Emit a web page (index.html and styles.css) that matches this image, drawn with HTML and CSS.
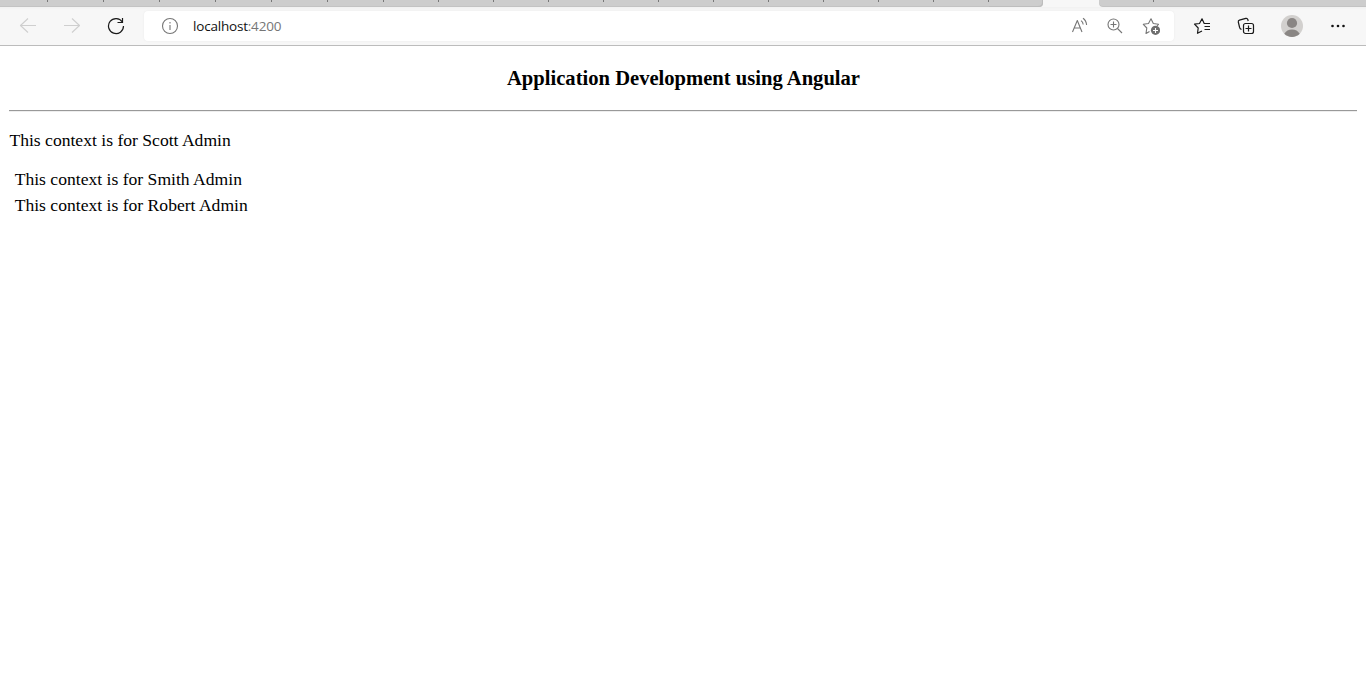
FILE: index.html
```html
<!DOCTYPE html>
<html lang="en">
<head>
<meta charset="utf-8">
<title>Angular</title>
<link rel="stylesheet" href="styles.css">
</head>
<body>
<div class="tabs">
  <i class="tab first"></i><i class="tab wide"></i><i class="tab wide"></i><i class="tab wide"></i><i class="tab wide"></i><i class="tab wide"></i><i class="tab wide"></i><i class="tab"></i><i class="tab"></i><i class="tab"></i><i class="tab"></i><i class="tab"></i><i class="tab"></i><i class="tab"></i><i class="tab"></i><i class="tab"></i><i class="tab"></i><i class="tab"></i><i class="tab before"></i><i class="active"></i><i class="tab after"></i><i class="rest"></i>
</div>
<header class="toolbar">
  <nav class="nav">
    <svg class="icon faded" viewBox="0 0 18 18"><path d="M17 8.5H1.5M9 1.5L1.5 8.5L9 15.5"/></svg>
    <svg class="icon faded" viewBox="0 0 18 18"><path d="M1 8.5h15.5M9 1.5l7.5 7L9 15.5"/></svg>
    <svg class="icon dark reload" viewBox="0 0 18 18"><path d="M15.3 5A7.5 7.5 0 1 0 16.5 9M15.5 1v4.5h-5"/></svg>
  </nav>
  <div class="address">
    <svg class="icon info" viewBox="0 0 18 18"><circle cx="9" cy="9" r="7.5"/><path d="M9 8v5M9 5v1.5"/></svg>
    <span class="url">localhost<span class="port">:4200</span></span>
    <div class="actions">
      <svg class="icon" viewBox="0 0 18 18"><path d="M2.5 15L7.3 3.5L12 15M4 11h6.6M11 3.6Q13 5 13.2 7.5M13 1.2Q16.3 3.5 16.6 8"/></svg>
      <svg class="icon" viewBox="0 0 18 18"><circle cx="7.5" cy="7.5" r="5.5"/><path d="M11.5 11.5L16 16M4.5 7.5h6M7.5 4.5v6"/></svg>
      <svg class="icon" viewBox="0 0 18 18"><path d="M7.5 14.5L4 16.5L4.8 11L1.3 7.3L6.5 6.5L9 1.8L11.3 6.5L16.5 7.3L15 9"/><circle class="disc" cx="13.5" cy="13.3" r="4.6"/><path class="plus" d="M11 13.5h5M13.5 11v5"/></svg>
    </div>
  </div>
  <div class="tools">
    <svg class="icon dark" viewBox="0 0 18 18"><path d="M9 14L4.5 16.3L5.2 11L1.5 7.2L6.5 6.5L9 1.8L11.2 6.5H17M11.5 9.5h5.5M11.5 12.5h5.5"/></svg>
    <svg class="icon dark" viewBox="0 0 18 18"><path d="M4.5 12.5Q3 12 2.6 10.5L1.3 5Q1 3.6 2.4 3.2L8.8 1.4Q10.3 1 10.8 2.5L11.2 4"/><rect x="6.5" y="6.5" width="10" height="10" rx="2"/><path d="M8.5 11.5h6M11.5 8.5v6"/></svg>
    <svg class="avatar" viewBox="0 0 22 22"><circle cx="11" cy="11" r="11" fill="#d2d0ce"/><circle cx="11" cy="8" r="5.1" fill="#8a8684"/><path d="M3.3 18.8Q5.8 14.4 11 14.4T18.7 18.8A11 11 0 0 1 3.3 18.8Z" fill="#8a8684"/></svg>
    <svg class="more" viewBox="0 0 18 18"><circle cx="3.5" cy="9" r="1.3"/><circle cx="9" cy="9" r="1.3"/><circle cx="14.5" cy="9" r="1.3"/></svg>
  </div>
</header>
<main class="page">
  <h3 class="title">Application Development using Angular</h3>
  <hr class="rule">
  <p class="lead">This context is for Scott Admin</p>
  <div class="rows">
    <div class="row">This context is for Smith Admin</div>
    <div class="row">This context is for Robert Admin</div>
  </div>
</main>
</body>
</html>
```
FILE: styles.css
```css
* { box-sizing: border-box; }
body { margin: 0; background: #fff; color: #000; font-family: "Liberation Serif", "Times New Roman", serif; overflow: hidden; }
.tabs { display: flex; height: 7px; background: #f7f7f7; }
.tab { flex: none; width: 55px; background: linear-gradient(#777, #777) right top / 1px 2px no-repeat #cdcdcd; box-shadow: inset 0 -1px #c3c3c3; }
.first { width: 48px; }
.wide { width: 56px; }
.before { width: 54px; background: #cdcdcd; border-bottom-right-radius: 4px; box-shadow: inset -1px -1px #bdbdbd; }
.active { flex: none; width: 56px; }
.after { border-bottom-left-radius: 4px; box-shadow: inset 0 -1px #c3c3c3; }
.rest { flex: 1; background: #cdcdcd; box-shadow: inset 0 -1px #c3c3c3; }
.toolbar { display: flex; align-items: center; height: 39px; background: linear-gradient(#f1f1f1, #f7f7f7 3px); border-bottom: 1px solid #bcbcbc; }
.nav { display: flex; gap: 26px; width: 144px; padding-left: 19px; }
.icon { flex: none; display: block; width: 18px; height: 18px; fill: none; stroke: #767676; stroke-width: 1.1; stroke-linejoin: round; }
.faded { stroke: #cfcfcf; }
.dark { stroke: #1a1a1a; stroke-width: 1.2; }
.reload { stroke-linejoin: miter; }
.address { display: flex; align-items: center; width: 1030px; height: 30px; padding: 0 14px 0 17px; border-radius: 4px; background: #fff; box-shadow: 0 0 2px #e8e8e8; }
.url { margin-left: 14px; font: 13.5px/18px "Open Sans", "Noto Sans", sans-serif; letter-spacing: -.2px; color: #111; }
.port { color: #767676; }
.actions { display: flex; gap: 18px; margin-left: auto; }
.disc { fill: #6e6e6e; stroke: none; }
.plus { stroke: #fff; }
.tools { display: flex; align-items: center; margin-left: 19px; gap: 26px; }
.avatar { width: 22px; height: 22px; }
.more { width: 18px; height: 18px; fill: #111; }
.page { padding: 0 9px; font-size: 17.6px; line-height: 20px; }
.title { margin: 20px 0 20px; padding: 1px 0 0 1px; font-size: 20.6px; line-height: 23px; text-align: center; }
.rule { height: 2px; margin: 0; border: 0; border-top: 1px solid #999; border-bottom: 1px solid #eee; }
.lead { margin: 18px 0 16px; padding-left: .4px; }
.rows { padding-left: 5.7px; }
.row { height: 26px; line-height: 26px; }
```
